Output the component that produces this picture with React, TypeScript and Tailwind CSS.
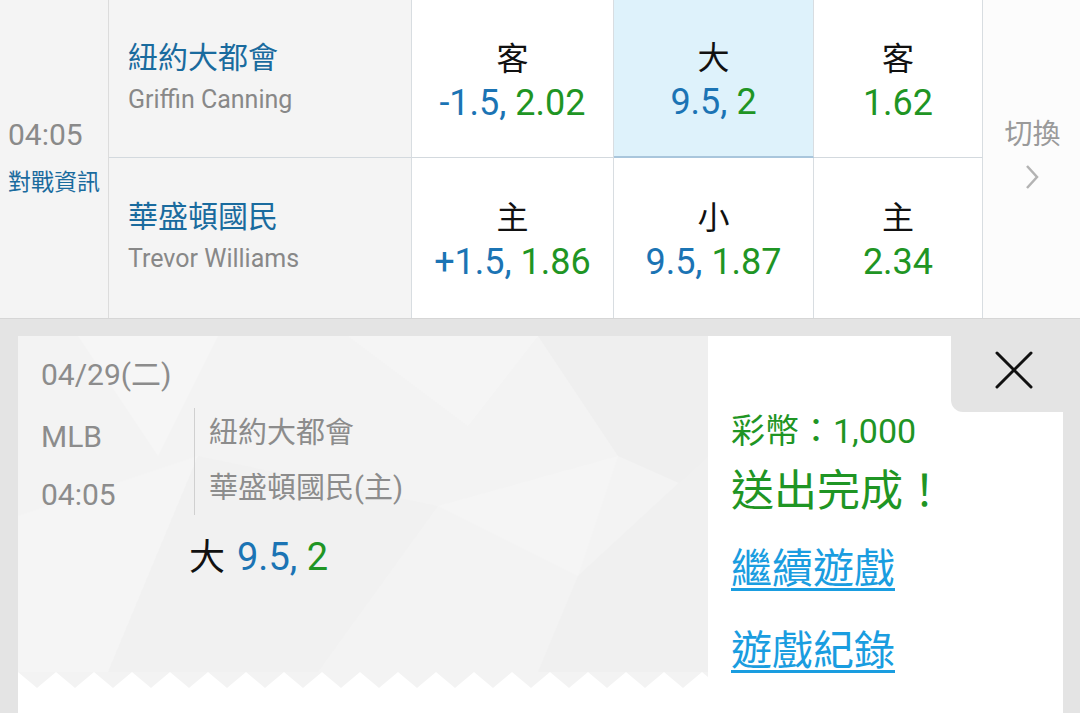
import React from "react";

const FONT = { fontFamily: "Roboto, 'Noto Sans CJK TC', 'Noto Sans', sans-serif" };

function OddsCell({
  label,
  a,
  b,
  w,
  selected,
  bottom,
}: {
  label: string;
  a?: string;
  b: string;
  w: string;
  selected?: boolean;
  bottom?: boolean;
}) {
  return (
    <div
      className={`${w} flex flex-col items-center justify-center border-r border-[#d8dde1] ${
        selected ? "bg-[#def2fb]" : "bg-white"
      } ${bottom ? "" : selected ? "border-b-2 border-b-[#a9c6dc]" : "border-b border-b-[#d3d9de]"}`}
    >
      <div className="mt-[4px] text-[32px] leading-[44px] text-[#111]">{label}</div>
      <div className="text-[36px] leading-[44px] whitespace-nowrap">
        {a ? (
          <>
            <span className="text-[#1b74b4]">{a}</span>{" "}
          </>
        ) : null}
        <span className="text-[#1f9524]">{b}</span>
      </div>
    </div>
  );
}

function TeamCell({ zh, en, bottom }: { zh: string; en: string; bottom?: boolean }) {
  return (
    <div
      className={`w-[303px] flex flex-col justify-center pl-[19px] bg-[#f4f4f4] border-r border-[#d8dde1] ${
        bottom ? "" : "border-b border-b-[#d3d9de]"
      }`}
    >
      <div className="text-[30px] leading-[42px] text-[#1a6b9e]">{zh}</div>
      <div className="text-[25px] leading-[42px] text-[#888]">{en}</div>
    </div>
  );
}

export default function App() {
  return (
    <div className="w-[1080px] h-[713px] overflow-hidden bg-[#e4e4e4]" style={FONT}>
      {/* Top table */}
      <div className="flex h-[319px] border-b border-[#d6d6d6] bg-white">
        <div className="w-[109px] bg-[#f4f4f4] border-r border-[#dcdcdc] flex flex-col justify-center pl-[8px]">
          <div className="text-[30px] leading-[48px] text-[#8a8a8a]">04:05</div>
          <div className="text-[23px] leading-[48px] text-[#1a6b9e]">對戰資訊</div>
        </div>
        <div className="flex flex-col">
          <div className="flex h-[158px]">
            <TeamCell zh="紐約大都會" en="Griffin Canning" />
            <OddsCell w="w-[202px]" label="客" a="-1.5," b="2.02" />
            <OddsCell w="w-[200px]" label="大" a="9.5," b="2" selected />
            <OddsCell w="w-[169px]" label="客" b="1.62" />
          </div>
          <div className="flex h-[160px]">
            <TeamCell zh="華盛頓國民" en="Trevor Williams" bottom />
            <OddsCell w="w-[202px]" label="主" a="+1.5," b="1.86" bottom />
            <OddsCell w="w-[200px]" label="小" a="9.5," b="1.87" bottom />
            <OddsCell w="w-[169px]" label="主" b="2.34" bottom />
          </div>
        </div>
        <div className="flex-1 flex flex-col items-center justify-center bg-[#fcfcfc] pb-[10px]">
          <div className="text-[28px] leading-[36px] text-[#9a9a9a] pl-[2px]">切換</div>
          <svg width="16" height="28" viewBox="0 0 16 28" className="mt-[10px]">
            <polyline points="3,3 13,14 3,25" fill="none" stroke="#b3b3b3" strokeWidth="2.5" />
          </svg>
        </div>
      </div>

      {/* Bottom card */}
      <div className="pl-[18px] pr-[17px] pt-[17px]">
        <div className="flex h-[400px] bg-white">
          {/* Left ticket */}
          <div className="w-[690px] flex flex-col">
            <div className="relative h-[336px] bg-[#f3f3f3] overflow-hidden">
              <svg className="absolute inset-0" width="690" height="336" viewBox="0 0 690 336">
                <polygon points="60,0 200,0 140,120" fill="#f6f6f6" />
                <polygon points="330,0 520,0 450,90" fill="#f5f5f5" />
                <polygon points="520,0 690,0 690,160 600,120" fill="#efefef" />
                <polygon points="0,180 180,120 90,336 0,336" fill="#f5f5f5" />
                <polygon points="180,120 420,170 300,336 90,336" fill="#f1f1f1" />
                <polygon points="560,240 690,120 690,336 520,336" fill="#f0f0f0" />
                <polygon points="420,170 600,120 560,240" fill="#f5f5f5" />
              </svg>
              <div className="relative pl-[23px] pt-[19px]">
                <div className="text-[30px] leading-[40px] text-[#8c8c8c]">04/29(二)</div>
                <div className="flex mt-[13px]">
                  <div className="w-[153px] flex flex-col">
                    <div className="text-[30px] leading-[58px] text-[#8c8c8c]">MLB</div>
                    <div className="text-[30px] leading-[58px] text-[#8c8c8c]">04:05</div>
                  </div>
                  <div className="w-px h-[107px] bg-[#d0d0d0]" />
                  <div className="pl-[14px] flex flex-col -mt-[2px]">
                    <div className="text-[29px] leading-[55px] text-[#8c8c8c]">紐約大都會</div>
                    <div className="text-[29px] leading-[55px] text-[#8c8c8c]">華盛頓國民(主)</div>
                  </div>
                </div>
                <div className="ml-[148px] text-[38px] leading-[66px] whitespace-nowrap">
                  <span className="text-[36px] text-[#111]">大</span>
                  <span className="text-[#1b74b4] ml-[12px]">9.5,</span>{" "}
                  <span className="text-[#1f9524]">2</span>
                </div>
              </div>
            </div>
            <svg width="690" height="16" viewBox="0 0 690 16" className="block">
              <defs>
                <pattern id="zig" width="38" height="16" patternUnits="userSpaceOnUse" x="0" y="0">
                  <polygon points="0,0 38,0 19,16" fill="#f3f3f3" />
                </pattern>
              </defs>
              <rect width="690" height="16" fill="white" />
              <rect width="690" height="16" fill="url(#zig)" />
            </svg>
          </div>

          {/* Right panel */}
          <div className="flex-1 flex flex-col">
            <div className="flex justify-end">
              <div className="w-[112px] h-[76px] bg-[#e4e4e4] rounded-bl-[12px] flex items-center justify-center pl-[14px] pb-[8px]">
                <svg width="38" height="38" viewBox="0 0 38 38">
                  <line x1="2" y1="2" x2="36" y2="36" stroke="#111" strokeWidth="3" strokeLinecap="round" />
                  <line x1="36" y1="2" x2="2" y2="36" stroke="#111" strokeWidth="3" strokeLinecap="round" />
                </svg>
              </div>
            </div>
            <div className="pl-[23px] flex flex-col items-start">
              <div className="text-[34px] leading-[38px] text-[#1f9524] whitespace-nowrap">彩幣：1,000</div>
              <div className="mt-[15px] text-[43px] leading-[52px] text-[#1f9524] whitespace-nowrap">送出完成！</div>
              <div className="mt-[26px] text-[41px] leading-[52px] text-[#1a9de0] underline decoration-[3px] underline-offset-[5px]">
                繼續遊戲
              </div>
              <div className="mt-[30px] text-[41px] leading-[52px] text-[#1a9de0] underline decoration-[3px] underline-offset-[5px]">
                遊戲紀錄
              </div>
            </div>
          </div>
        </div>
      </div>
    </div>
  );
}
